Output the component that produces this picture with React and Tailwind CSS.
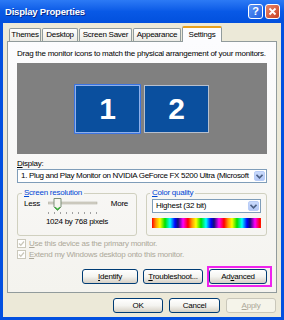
import React from 'react';

const XpButton = ({ children, className = '', disabled = false }) => (
  <button
    className={`h-[15px] rounded-[3px] border text-[8px] leading-none flex items-center justify-center ${disabled
      ? 'border-[#c9c7ba] bg-[#f5f4ea] text-[#aca899]'
      : 'border-[#003c74] bg-gradient-to-b from-white via-[#f4f4f0] to-[#d6d0c5] text-black'
      } ${className}`}
  >
    {children}
  </button>
);

const Chevron = () => (
  <div className="w-[11px] h-full rounded-[2px] bg-gradient-to-b from-[#c9dafc] to-[#b4c8f6] border border-[#b9cdf7] flex items-center justify-center">
    <svg width="7" height="5" viewBox="0 0 7 5">
      <path d="M0.5 0.8 L3.5 3.8 L6.5 0.8" stroke="#4d6185" strokeWidth="1.6" fill="none" />
    </svg>
  </div>
);

const Select = ({ text, className = '', textClass = '' }) => (
  <div className={`h-[14px] border border-[#7f9db9] bg-white flex items-center pl-[3px] pr-[1px] py-[1px] ${className}`}>
    <span className={`flex-1 text-[8px] ${textClass} leading-none whitespace-nowrap overflow-hidden`}>{text}</span>
    <Chevron />
  </div>
);

const CheckRow = ({ ul, rest }) => (
  <div className="flex items-center h-[11px] gap-[3px]">
    <div className="w-[9px] h-[9px] border border-[#cac8bb] bg-white flex items-center justify-center">
      <svg width="7" height="7" viewBox="0 0 7 7">
        <path d="M1 3.5 L2.8 5.3 L6 1.5" stroke="#cac8bb" strokeWidth="1.3" fill="none" />
      </svg>
    </div>
    <span className="text-[8px] leading-none text-[#aca899] whitespace-nowrap">
      <span className="underline">{ul}</span>{rest}
    </span>
  </div>
);

const Monitor = ({ n, selected }) => (
  <div className={selected ? 'p-[1px] bg-[#3c74e0] rounded-[1px]' : 'p-[1px]'}>
    <div className={`w-[65px] h-[48px] bg-[#0a4f9e] border ${selected ? 'border-[#8fb0ea]' : 'border-[#b7c0cf]'} flex items-center justify-center`}>
      <span className="text-white font-bold text-[30px] leading-none tracking-normal">{n}</span>
    </div>
  </div>
);

export default function App() {
  return (
    <div
      className="w-[284px] h-[320px] flex flex-col bg-[#0350e0] overflow-hidden text-black tracking-[-0.25px]"
      style={{ fontFamily: '"Liberation Sans", Arial, sans-serif' }}
    >
      {/* title bar */}
      <div className="h-[23px] flex items-center pl-[5px] pr-[4px] bg-gradient-to-b from-[#2c7af5] via-[#0859e6] to-[#0250dd]">
        <span className="flex-1 text-white font-bold text-[9.5px] tracking-[-0.2px] leading-none [text-shadow:1px_1px_0_#0a2a8a]">Display Properties</span>
        <div className="flex gap-[2px]">
          <div className="w-[15px] h-[15px] rounded-[3px] border border-white bg-gradient-to-br from-[#5d95f5] to-[#1f5fe0] flex items-center justify-center">
            <span className="text-white font-bold text-[11px] leading-none">?</span>
          </div>
          <div className="w-[15px] h-[15px] rounded-[3px] border border-white bg-gradient-to-br from-[#e8856a] to-[#c7401e] flex items-center justify-center">
            <svg width="9" height="9" viewBox="0 0 9 9">
              <path d="M1.5 1.5 L7.5 7.5 M7.5 1.5 L1.5 7.5" stroke="white" strokeWidth="1.8" />
            </svg>
          </div>
        </div>
      </div>

      {/* dialog body */}
      <div className="flex-1 mx-[3px] mb-[3px] bg-[#ece9d8] flex flex-col px-[4px]">
        {/* tabs */}
        <div className="flex items-end h-[17px] pl-[2px] mt-[1px]">
          {[
            ['Themes', 'w-[32px]'],
            ['Desktop', 'w-[36px]'],
            ['Screen Saver', 'w-[53px]'],
            ['Appearance', 'w-[48px]'],
          ].map(([t, w]) => (
            <div key={t} className={`${w} h-[13px] mr-[1px] border border-b-0 border-[#919b9c] rounded-t-[2px] bg-gradient-to-b from-white to-[#ecebe5] flex items-center justify-center text-[8px] leading-none whitespace-nowrap`}>
              {t}
            </div>
          ))}
          <div className="w-[40px] h-[16px] -mb-[1px] relative z-10 border border-b-0 border-[#919b9c] border-t-2 border-t-[#e8a11e] rounded-t-[2px] bg-[#fcfcfe] flex items-center justify-center text-[8px] leading-none">
            Settings
          </div>
        </div>

        {/* tab panel */}
        <div className="border border-[#919b9c] bg-gradient-to-b from-[#fcfcfe] to-[#f4f3ee] px-[9px] pt-[6px] pb-[8px] flex flex-col">
          <p className="text-[8px] leading-[11px] whitespace-nowrap">Drag the monitor icons to match the physical arrangement of your monitors.</p>

          <div className="mt-[4px] h-[91px] bg-[#808080] flex items-center justify-center gap-[2px]">
            <Monitor n="1" selected />
            <Monitor n="2" />
          </div>

          <p className="mt-[5px] text-[8px] leading-[10px]"><span className="underline">D</span>isplay:</p>
          <Select text="1. Plug and Play Monitor on NVIDIA GeForce FX 5200 Ultra (Microsoft" textClass="tracking-[-0.32px]" />

          <div className="mt-[5px] flex gap-[9px]">
            <fieldset className="w-[120px] h-[48px] border border-[#d0d0bf] rounded-[3px] px-[6px]">
              <legend className="ml-[-2px] px-[2px] text-[8px] leading-[10px] text-[#0046d5]"><span className="underline">S</span>creen resolution</legend>
              <div className="flex items-start">
                <span className="text-[8px] leading-[10px] mt-[1px]">Less</span>
                <div className="ml-[8px] w-[50px] h-[18px]">
                  <svg width="50" height="18" viewBox="0 0 50 18">
                    <rect x="0" y="4" width="49" height="2" fill="#d6d3c9" stroke="#a9a798" strokeWidth="0.5" />
                    {[0, 6, 12, 18, 24, 30, 36, 42, 48].map((x) => (
                      <rect key={x} x={x} y="14" width="1" height="2" fill="#a0a0a0" />
                    ))}
                    <path d="M6 0.5 H13 V9 L9.5 12.5 L6 9 Z" fill="#f6f5ef" stroke="#7d8f78" strokeWidth="1" />
                    <path d="M7 9.2 L9.5 11.5 L12 9.2" stroke="#3fb33f" strokeWidth="1.3" fill="none" />
                  </svg>
                </div>
                <span className="ml-auto mr-[2px] text-[8px] leading-[10px] mt-[1px]">More</span>
              </div>
              <p className="text-center text-[8px] leading-[10px] mt-[1px]">1024 by 768 pixels</p>
            </fieldset>

            <fieldset className="w-[121px] h-[48px] border border-[#d0d0bf] rounded-[3px] px-[5px]">
              <legend className="ml-[-2px] px-[2px] text-[8px] leading-[10px] text-[#0046d5]"><span className="underline">C</span>olor quality</legend>
              <Select text="Highest (32 bit)" className="mt-[1px]" />
              <div className="mt-[5px] h-[10px] bg-[repeating-linear-gradient(90deg,#ff0000_0px,#ff9a00_4px,#ffff00_8px,#00e000_13px,#00ffff_18px,#0000ff_23px,#10107a_26px,#ff00ff_31px,#ff0000_36px)]" />
            </fieldset>
          </div>

          <div className="mt-[2px] flex flex-col">
            <CheckRow ul="U" rest="se this device as the primary monitor." />
            <CheckRow ul="E" rest="xtend my Windows desktop onto this monitor." />
          </div>

          <div className="mt-[9px] flex justify-end">
            <XpButton className="w-[56px]"><span><span className="underline">I</span>dentify</span></XpButton>
            <XpButton className="w-[60px] ml-[5px]"><span><span className="underline">T</span>roubleshoot...</span></XpButton>
            <div className="relative ml-[6px]">
              <XpButton className="w-[58px]"><span>Ad<span className="underline">v</span>anced</span></XpButton>
              <span className="absolute -left-[2px] -right-[5px] -top-[3px] -bottom-[3px] border-2 border-[#ee22ee] pointer-events-none" />
            </div>
          </div>
        </div>

        {/* bottom buttons */}
        <div className="mt-[5px] flex justify-end pr-[1px] gap-[6px]">
          <XpButton className="w-[50px]">OK</XpButton>
          <XpButton className="w-[51px]">Cancel</XpButton>
          <XpButton className="w-[50px]" disabled><span><span className="underline">A</span>pply</span></XpButton>
        </div>
      </div>
    </div>
  );
}
